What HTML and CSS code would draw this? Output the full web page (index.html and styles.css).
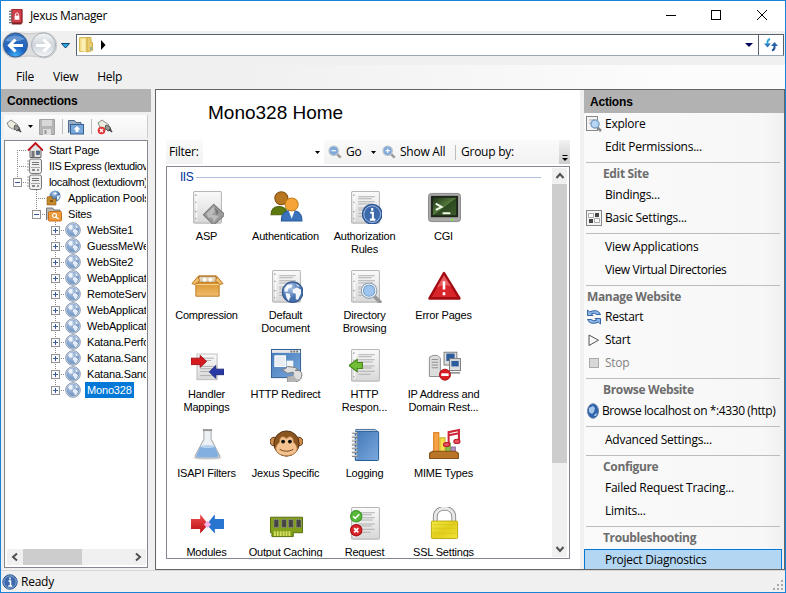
FILE: index.html
```html
<!DOCTYPE html>
<html lang="en">
<head>
<meta charset="utf-8">
<title>Jexus Manager</title>
<link rel="stylesheet" href="styles.css">
</head>
<body>
<svg class="defs" width="0" height="0">
  <defs>
    <linearGradient id="gPaper" x2="0" y2="1"><stop stop-color="#fafafa"/><stop offset="1" stop-color="#d8d8d8"/></linearGradient>
    <radialGradient id="gGlobe" cx=".4" cy=".3"><stop stop-color="#a8c6ea"/><stop offset="1" stop-color="#4570ad"/></radialGradient>
    <radialGradient id="gBack" cx=".5" cy=".95" r=".9"><stop stop-color="#3fb0f5"/><stop offset=".45" stop-color="#1c60c0"/><stop offset="1" stop-color="#3672bd"/></radialGradient>
    <linearGradient id="gGray" x2="0" y2="1"><stop stop-color="#f4f6f8"/><stop offset=".5" stop-color="#cfd5db"/><stop offset="1" stop-color="#f3f5f7"/></linearGradient>
    <linearGradient id="gBlue" x2="1" y2="1"><stop stop-color="#4279b9"/><stop offset="1" stop-color="#7ba8dc"/></linearGradient>
    <linearGradient id="gRed" x2="0" y2="1"><stop stop-color="#f05050"/><stop offset="1" stop-color="#b80d12"/></linearGradient>
    <linearGradient id="gGold" x2="1" y2="1"><stop stop-color="#f4ec4a"/><stop offset=".5" stop-color="#e2cf1c"/><stop offset="1" stop-color="#f0e23c"/></linearGradient>
    <linearGradient id="gBox" x2="0" y2="1"><stop stop-color="#d9952d"/><stop offset="1" stop-color="#f0bd6e"/></linearGradient>
    <linearGradient id="gTerm" x2="1" y2="1"><stop stop-color="#1f3318"/><stop offset=".5" stop-color="#557a3c"/><stop offset=".52" stop-color="#2c4a20"/><stop offset="1" stop-color="#3d5c2c"/></linearGradient>

    <symbol id="globe" viewBox="0 0 16 16"><circle cx="8" cy="8" r="7.300" fill="#d3e0ef" stroke="#8797ae"/><circle cx="8" cy="8" r="6.300" fill="url(#gGlobe)" opacity=".6"/><path d="M3 5l2-2 3 0-1 2 1 1-2 2-2-1zM8 8l2-1 3 2-1 3-2 1.500-1-2.500-1-1zM10 3l2 1 1 2-2 0z" fill="#fff" opacity=".8"/></symbol>
    <symbol id="server" viewBox="0 0 16 16"><rect x="2.500" y="1" width="12" height="14.500" rx="2" fill="#eee" stroke="#777"/><path d="M5 4.500h7M5 6.500h7" stroke="#777"/><path d="M4 9.500h9" stroke="#aaa"/><rect x="5" y="11" width="3" height="2" fill="#888"/><circle cx="11" cy="12" r="1" fill="#777"/><path d="M0 3h3M0 6h3M0 9h3M0 12h3" stroke="#999"/></symbol>
    <symbol id="home" viewBox="0 0 16 16"><path d="M3 7v8.500h11V7L8.500 2z" fill="#e4e4e4" stroke="#666"/><path d="M1 8.500L8.500 1 16 8.500" fill="none" stroke="#c4151c" stroke-width="1.800"/><rect x="4.500" y="9" width="3" height="6" fill="#777"/><rect x="9.500" y="9" width="3" height="3.500" fill="#4a74a8" stroke="#444" stroke-width=".6"/></symbol>
    <symbol id="pool" viewBox="0 0 16 16"><circle cx="9" cy="6" r="5.500" fill="url(#gGlobe)"/><path d="M7 3l3-1 1 2-2 1zM11 6l3-1-1 4-2 1z" fill="#e6f0fa"/><path d="M1 7l5-1v3h4v6H1z" fill="#c68a2c" stroke="#8a5a14" stroke-width=".6"/><path d="M4 10h3v2H4z" fill="#8a5a14"/></symbol>
    <symbol id="sites" viewBox="0 0 16 16"><path d="M.5 14V2h6l1.500 2h6v3" fill="#b9b9b9" stroke="#777"/><rect x="2.500" y="5.500" width="13" height="9.500" rx="1" fill="#ef9a3c" stroke="#c56f17"/><circle cx="8.500" cy="9.500" r="2" fill="none" stroke="#fff" stroke-width="1.200"/><path d="M10 11l2.500 2" stroke="#fff" stroke-width="1.300"/></symbol>
    <symbol id="plug" viewBox="0 0 16 16"><path d="M1 4l4-3 7 5-3 5-6-3z" fill="#ededdf" stroke="#888"/><path d="M9 6l4 2 1 3-3 1-3-3z" fill="#9a9a94" stroke="#555"/><path d="M12 10l3 3" stroke="#444" stroke-width="1.700"/></symbol>
    <symbol id="mag" viewBox="0 0 16 16"><path d="M9.500 9.500l5 5" stroke="#9c9c9c" stroke-width="3"/><circle cx="6.500" cy="6.500" r="5.300" fill="#7fa9dc" stroke="#b9c3cd" stroke-width="1.500"/></symbol>
    <symbol id="info" viewBox="0 0 16 16"><circle cx="8" cy="8" r="7.200" fill="#3c69ac" stroke="#2b5597"/><circle cx="8" cy="8" r="6.200" fill="none" stroke="#a9c0df" stroke-width=".7"/><path d="M6.500 7h2v4.500M6.300 12h4M8 3.500v2" fill="none" stroke="#fff" stroke-width="1.500"/></symbol>
    <symbol id="page" viewBox="0 0 32 32"><ellipse cx="16" cy="31.500" rx="13" ry="1" fill="#ddd"/><rect x="2.500" y=".5" width="27" height="30.500" rx="1" fill="url(#gPaper)" stroke="#b7b7b7"/><path d="M5.500 2v27" stroke="#fff"/><path d="M4 4h1.500M4 11h1.500M4 20h1.500M4 27h1.500" stroke="#999"/></symbol>
    <symbol id="lines" viewBox="0 0 32 32"><path d="M9 5.500h16M9 7.500h13M9 10.500h16M9 12.500h14M9 16.500h16M9 18.500h13M9 21.500h16M9 24.500h12" stroke="#b0b0b0"/></symbol>

    <symbol id="asp" viewBox="0 0 32 32"><use href="#page"/><path d="M22 13l11 10-11 10-10-10z" fill="#9b9b9b" stroke="#777"/><path d="M15 22l7-7 1 5-3 3 7 1-5 6-1-4-4 0z" fill="#bcbcbc"/><path d="M23 16l4 4-2 4z" fill="#777"/></symbol>
    <symbol id="users" viewBox="0 0 32 32"><path d="M1 23c0-7 5-8 8-8s8 2 8 8z" fill="#5e7810" stroke="#4b620a"/><circle cx="11" cy="7" r="6.300" fill="#b77622" stroke="#835010"/><path d="M11 29c0-8 4-10 10-10s10 2 10 10z" fill="#3a72bb" stroke="#2a5a9d"/><path d="M18 19l3 8 3-8z" fill="#fff"/><circle cx="21" cy="13" r="6.300" fill="#f5a437" stroke="#c77c16"/></symbol>
    <symbol id="auth" viewBox="0 0 32 32"><use href="#page"/><use href="#lines"/><use href="#info" x="12" y="12" width="21" height="21"/></symbol>
    <symbol id="cgi" viewBox="0 0 34 32"><rect x=".5" y="1.500" width="33" height="29" rx="3" fill="#aaa" stroke="#888"/><rect x="3" y="4" width="28" height="22" fill="#1d2419"/><rect x="5" y="6" width="24" height="18" fill="url(#gTerm)"/><path d="M8 12l6 3.500-6 3M15 22h8" fill="none" stroke="#eff8e7" stroke-width="2"/><path d="M24 28.500h2" stroke="#6f3" stroke-width="2"/></symbol>
    <symbol id="box" viewBox="0 0 34 32"><path d="M5 12h24v14H5z" fill="url(#gBox)" stroke="#bd7b20"/><path d="M8 5h18l4 7H4z" fill="#9a6725" stroke="#c98428"/><path d="M9 6h16l2 5H7z" fill="#e2d3b8"/><circle cx="14" cy="9" r="2" fill="#fff"/><circle cx="20" cy="9" r="2" fill="#fff"/><path d="M7 6l-6 7 3 1 5-4zM27 6l6 7-3 1-5-4z" fill="#edbb6a" stroke="#bd7b20"/><path d="M5 14h24" stroke="#f9d598"/></symbol>
    <symbol id="doc" viewBox="0 0 32 32"><use href="#page"/><use href="#lines"/><circle cx="22" cy="21.500" r="10" fill="url(#gGlobe)" stroke="#34588d"/><path d="M14 18l3-4 5 0-1 3-3 1-1 3-3 0zM15 22l4 1 1 3-2 4-2-3zM22 19l4-2 4 2 0 4-3 6-2-1 0-5-3-1zM25 13l4 3-2 0z" fill="#f4f8fc"/></symbol>
    <symbol id="browse" viewBox="0 0 32 32"><use href="#page"/><use href="#lines"/><path d="M24 25l7 7" stroke="#999" stroke-width="3.500"/><circle cx="19.500" cy="20" r="6.500" fill="#9cc4ef" stroke="#f5f5f5" stroke-width="2.500"/><circle cx="19.500" cy="20" r="7.500" fill="none" stroke="#8d9eb0"/><circle cx="19.500" cy="20" r="5.500" fill="none" stroke="#6f9dcf"/></symbol>
    <symbol id="error" viewBox="0 0 32 32"><path d="M15.500 3L1.500 27.500h29z" fill="#d9262b" stroke="#a40b12" stroke-width="2.500" stroke-linejoin="round"/><path d="M15.500 5l-7 12q7-4 14-1z" fill="#ee7477" opacity=".7"/><path d="M15.500 11v8M15.500 21.500v3" stroke="#fff" stroke-width="2.500"/></symbol>
    <symbol id="handler" viewBox="0 0 36 32"><rect x="6.500" y="3.500" width="22" height="28" fill="url(#gPaper)" stroke="#bbb"/><path d="M10 8h15M10 10.500h12M10 17h15M10 19.500h13M10 22.500h15M10 27h14" stroke="#aaa"/><path d="M0 8h10V5l7 6.500-7 6.500v-3H0z" fill="#d71920" stroke="#9c1015"/><path d="M36 20H27v-4l-7 7 7 7v-4h9z" fill="#2939a5" stroke="#1c277c"/></symbol>
    <symbol id="redirect" viewBox="0 0 34 34"><rect x="1.500" y=".5" width="30" height="29" fill="url(#gBlue)" stroke="#315e94"/><path d="M2 2.500h29" stroke="#e7e7e7" stroke-width="3"/><path d="M21 2.500h8" stroke="#777" stroke-width="2" stroke-dasharray="2 1"/><rect x="5" y="7" width="11" height="11" fill="#e8edf3" stroke="#fff"/><rect x="17" y="12" width="7" height="8" fill="#f4f6f9"/><path d="M12 21q5 0 6-3l8 1 3 3h-3c6-1 8 3 6 8-2 4-8 5-14 4v-6c5 1 7-1 6-4l-6 1z" fill="#dedede" stroke="#777"/><path d="M18 28v6c5 1 9 0 12-3q-4 1-5-4-3 2-7 1z" fill="#b5b5b5"/></symbol>
    <symbol id="response" viewBox="0 0 32 32"><use href="#page"/><use href="#lines"/><path d="M0 16l8-6v3h5v6H8v3z" fill="#72bd38" stroke="#438617"/></symbol>
    <symbol id="ip" viewBox="0 0 36 32"><path d="M1.500 28V7l4-2h5l3 3v20z" fill="#ddd" stroke="#888"/><path d="M4 9.500h7M4 12.500h7M4 15.500h7M4 18.500h7" stroke="#888"/><rect x="17.500" y="1.500" width="14" height="14" fill="#ddd" stroke="#777"/><rect x="20" y="3" width="9" height="8" fill="#2d5c9e"/><rect x="23.500" y="8.500" width="12" height="13" fill="#ddd" stroke="#777"/><rect x="25.500" y="11" width="8" height="6" fill="#2d5c9e"/><path d="M22 24h13" stroke="#999" stroke-width="2"/><circle cx="18.500" cy="26" r="6" fill="#d91d23" stroke="#a90e13"/><path d="M14.500 26h8" stroke="#fff" stroke-width="3"/></symbol>
    <symbol id="flask" viewBox="0 0 32 32"><ellipse cx="16" cy="29" rx="14" ry="2" fill="#e5e5e5"/><path d="M12.500 2v9L4 27q0 2 3 2h18q3 0 3-2L19.500 11V2z" fill="#edf1f5" stroke="#aaa"/><path d="M9 18h14l4 9q-1 1.500-3 1.500H8q-3 0-3-1.500z" fill="#82afe0"/><ellipse cx="16" cy="18" rx="7" ry="1.500" fill="#b6d1ed"/><path d="M11.500 2h9" stroke="#999" stroke-width="2"/></symbol>
    <symbol id="monkey" viewBox="0 0 34 32"><circle cx="4.500" cy="13" r="4.500" fill="#cf8d4b" stroke="#523012"/><circle cx="29.500" cy="13" r="4.500" fill="#cf8d4b" stroke="#523012"/><circle cx="17" cy="15" r="13" fill="#8a541f" stroke="#523012"/><path d="M6 20c0-4 4-5 4-8 0-5 5-5 7-2 2-3 7-3 7 2 0 3 4 4 4 8 0 10-22 10-22 0z" fill="#f3c28f" stroke="#b07a45"/><circle cx="13.500" cy="13" r="2" fill="#111"/><circle cx="20.500" cy="13" r="2" fill="#111"/><path d="M10 21q7 4 14 0" fill="none" stroke="#784617"/></symbol>
    <symbol id="book" viewBox="0 0 32 34"><path d="M6 1.500h20l2 2v30H6z" fill="#d0d8e1" stroke="#456f9e"/><rect x="5.500" y="3.500" width="24" height="30" rx="1" fill="url(#gBlue)" stroke="#235b99"/><path d="M7 5v27" stroke="#abc8e7"/><path d="M2 5h6M2 9h6M2 13h6M2 17h6M2 21h6M2 25h6M2 29h6" stroke="#777" stroke-width="2"/><path d="M2 4.500h5M2 8.500h5M2 12.500h5M2 16.500h5M2 20.500h5M2 24.500h5M2 28.500h5" stroke="#eee"/></symbol>
    <symbol id="mime" viewBox="0 0 32 32"><rect x="5.500" y="4.500" width="5" height="19" fill="#f6a246" stroke="#d77c19"/><rect x="11.500" y="9.500" width="5" height="14" fill="#f5df4f" stroke="#c8ac20"/><rect x="17.500" y="14.500" width="4" height="9" fill="#8bc749" stroke="#609927"/><rect x="22.500" y="18.500" width="4" height="5" fill="#b294c2" stroke="#8b6c9d"/><path d="M1.500 24.500l3-2h22l3 2v5h-28z" fill="#b97527" stroke="#885015"/><path d="M20 16V4l10-2v11M20 7l10-2" fill="none" stroke="#ce2537" stroke-width="2"/><ellipse cx="18" cy="16" rx="3" ry="2" fill="#eb5261" stroke="#b71c2c"/><ellipse cx="28" cy="13" rx="3" ry="2" fill="#eb5261" stroke="#b71c2c"/></symbol>
    <symbol id="modules" viewBox="0 0 36 32"><path d="M0 11h10V6l9 11-9 10v-5H0z" fill="url(#gRed)"/><path d="M36 11H26V6l-9 11 9 10v-5h10z" fill="#2775ce"/><path d="M18 13l4 4-4 4-4-4z" fill="#f4b4e9"/></symbol>
    <symbol id="ram" viewBox="0 0 34 32"><path d="M.5 9.500h33v16H24v4H2v-4H.5z" fill="#829f1c" stroke="#596f10"/><path d="M5 24v5M8 24v5M11 24v5M14 24v5M17 24v5M20 24v5" stroke="#d6dd61" stroke-width="2"/><path d="M4 12h5v8H4zM12 12h5v8h-5zM19 12h5v8h-5zM27 12h5v8h-5z" fill="#444" stroke="#a4a4a4" stroke-width="1" stroke-dasharray="1 1"/></symbol>
    <symbol id="request" viewBox="0 0 32 32"><use href="#page"/><use href="#lines"/><circle cx="7" cy="9" r="5.500" fill="#57b83a" stroke="#379620"/><path d="M4 9l2 2 4-4" stroke="#fff" stroke-width="1.500" fill="none"/><circle cx="7" cy="22.500" r="5.500" fill="#d9262b" stroke="#a80e13"/><path d="M5 20.500l4 4m0-4l-4 4" stroke="#fff" stroke-width="1.700"/></symbol>
    <symbol id="lock" viewBox="0 0 32 34"><path d="M6.500 15V10C6.500-1.500 25.500-1.500 25.500 10v5" fill="none" stroke="#8d8d8d" stroke-width="5"/><path d="M6.500 15V10C6.500-1.500 25.500-1.500 25.500 10v5" fill="none" stroke="#e8e8e8" stroke-width="3"/><rect x="2.500" y="14.500" width="27" height="18" rx="1" fill="url(#gGold)" stroke="#bca90c"/><path d="M4 18h24M4 22h24M4 27h24" stroke="#d0bd16" opacity=".5"/></symbol>
  </defs>
</svg>

<div class="window">
  <header class="title">
    <svg class="app-icon" viewBox="0 0 16 18"><path d="M3 1.500h11.500v14l-1.500 2H3z" fill="#7b2025"/><rect x="3" y="1.500" width="10.500" height="14" fill="#d33f48" stroke="#a32730"/><path d="M0 3.500h4M0 6.500h4M0 9.500h4M0 12.500h4M0 15.500h4" stroke="#666" stroke-width="1.300"/><rect x="6" y="8" width="5" height="4.500" fill="#fff"/><path d="M7 8V6q1.500-2 3 0v2" fill="none" stroke="#fff"/></svg>
    <span class="title-text">Jexus Manager</span>
    <svg class="win-buttons" viewBox="0 0 120 30" fill="none" stroke="#000"><path d="M0 14.500h10"/><rect x="45.500" y="9.500" width="9" height="9"/><path d="M91 9l10 10m0-10l-10 10"/></svg>
  </header>

  <div class="nav">
    <svg class="nav-buttons" viewBox="0 0 72 32"><path d="M14 1.500Q28 4 43 1.500A12.500 12.500 0 0 1 43 27Q28 23 14 27A12.500 12.500 0 0 1 14 1.500" fill="#dedede" stroke="#c8c8c8"/><circle cx="14.500" cy="14" r="12" fill="url(#gBack)" stroke="#3a5d8e"/><path d="M5 8q9-7 19 0-9 4-19 2z" fill="#8ab3e0" opacity=".6"/><path d="M22 14.500H9m5.500-6L8.500 14.500l6 6" fill="none" stroke="#fff" stroke-width="3"/><circle cx="42.500" cy="14" r="12" fill="url(#gGray)" stroke="#a9b0b7"/><path d="M35 14.500h13m-5.500-6l6 6-6 6" fill="none" stroke="#fff" stroke-width="3"/><path d="M60.500 12.500h8l-4 4.500z" fill="#29abe2" stroke="#123e73"/></svg>
    <div class="address">
      <svg class="folder" viewBox="0 0 14 18"><path d="M.5 1.500H8v14H.5z" fill="#f2dc88" stroke="#d9bd5a"/><path d="M8 1.500h4v5h1.500v8L8 16z" fill="#eacb6c" stroke="#cfae4b"/><path d="M2.500 3h4v13l-4-1z" fill="#fbefb4"/><path d="M12 11v3" stroke="#4b9bd8"/></svg>
      <svg class="crumb" viewBox="0 0 6 10"><path d="M1 0v10l4.500-5z"/></svg>
      <svg class="addr-caret" viewBox="0 0 8 4"><path d="M0 0h8L4 4z" fill="#00005c"/></svg>
      <div class="refresh"><svg viewBox="0 0 14 14"><path d="M0 5.500h7L3.500 9.500z" fill="#2f78bf"/><path d="M3.500 6Q3 2 6 1" fill="none" stroke="#2fa4dc" stroke-width="2"/><path d="M7 8h7L10.500 4z" fill="#2b66ac"/><path d="M10.500 7.500q.5 4-2.500 5" fill="none" stroke="#25549a" stroke-width="2"/></svg></div>
    </div>
  </div>

  <nav class="menu"><span>File</span><span>View</span><span>Help</span></nav>

  <main class="main">
    <section class="connections">
      <h2 class="panel-head">Connections</h2>
      <div class="conn-tools">
        <svg class="t16" viewBox="0 0 16 16"><use href="#plug"/></svg>
        <svg class="caret conn-caret" viewBox="0 0 5 3"><path d="M0 0h5L2.500 3z"/></svg>
        <svg class="t16 save" viewBox="0 0 16 16"><path d="M.5.500h15v15H.5z" fill="#b5b5b5" stroke="#a2a2a2"/><path d="M3 1h10v6H3z" fill="#d8d8d8"/><path d="M4 10h8v6H4z" fill="#ddd"/><path d="M5.500 11h2v4h-2z" fill="#999"/></svg>
        <i class="vsep"></i>
        <svg class="t16 up" viewBox="0 0 16 16"><path d="M.5 14V1.500h6L8 3.500h5v3" fill="#9badc1" stroke="#4c6b8f"/><rect x="2.500" y="5.500" width="13" height="9.500" fill="#78a7dc" stroke="#365f94"/><path d="M9 7l3.500 3.500h-2V13h-3v-2.500h-2z" fill="#fff"/></svg>
        <i class="vsep"></i>
        <svg class="t16 drop" viewBox="0 0 16 16"><use href="#plug"/><circle cx="4.500" cy="11.500" r="3.800" fill="#de3434"/><path d="M3 10l3 3m0-3l-3 3" stroke="#fff" stroke-width="1.300"/></svg>
      </div>
      <div class="tree">
        <div class="row"><i class="joint down"></i><svg class="ti"><use href="#home"/></svg><span>Start Page</span></div>
        <div class="row narrow"><i class="joint full"></i><svg class="ti"><use href="#server"/></svg><span>IIS Express (lextudiovm)</span></div>
        <div class="row narrow"><i class="joint"><b class="exp"></b></i><svg class="ti"><use href="#server"/></svg><span>localhost (lextudiovm)</span></div>
        <div class="row l2"><i class="joint full"></i><svg class="ti"><use href="#pool"/></svg><span>Application Pools</span></div>
        <div class="row l2"><i class="joint"><b class="exp"></b></i><svg class="ti"><use href="#sites"/></svg><span>Sites</span></div>
        <div class="row l3"><i class="joint full"><b class="exp plus"></b></i><svg class="ti"><use href="#globe"/></svg><span>WebSite1</span></div>
        <div class="row l3"><i class="joint full"><b class="exp plus"></b></i><svg class="ti"><use href="#globe"/></svg><span>GuessMeWeb</span></div>
        <div class="row l3"><i class="joint full"><b class="exp plus"></b></i><svg class="ti"><use href="#globe"/></svg><span>WebSite2</span></div>
        <div class="row l3"><i class="joint full"><b class="exp plus"></b></i><svg class="ti"><use href="#globe"/></svg><span>WebApplication</span></div>
        <div class="row l3"><i class="joint full"><b class="exp plus"></b></i><svg class="ti"><use href="#globe"/></svg><span>RemoteService</span></div>
        <div class="row l3"><i class="joint full"><b class="exp plus"></b></i><svg class="ti"><use href="#globe"/></svg><span>WebApplication</span></div>
        <div class="row l3"><i class="joint full"><b class="exp plus"></b></i><svg class="ti"><use href="#globe"/></svg><span>WebApplication</span></div>
        <div class="row l3"><i class="joint full"><b class="exp plus"></b></i><svg class="ti"><use href="#globe"/></svg><span>Katana.Performance</span></div>
        <div class="row l3"><i class="joint full"><b class="exp plus"></b></i><svg class="ti"><use href="#globe"/></svg><span>Katana.Sandbox</span></div>
        <div class="row l3"><i class="joint full"><b class="exp plus"></b></i><svg class="ti"><use href="#globe"/></svg><span>Katana.Sandbox</span></div>
        <div class="row l3"><i class="joint"><b class="exp plus"></b></i><svg class="ti"><use href="#globe"/></svg><span class="selected">Mono328</span></div>
        <div class="hscroll"><svg class="chev" viewBox="0 0 16 16"><path d="M10 4.500L6 8l4 3.500"/></svg><div class="hthumb"></div><svg class="chev right" viewBox="0 0 16 16"><path d="M6 4.500L10 8l-4 3.500"/></svg></div>
      </div>
    </section>

    <section class="center">
      <h1>Mono328 Home</h1>
      <div class="filter">
        <span class="f-label">Filter:</span>
        <div class="f-input"><svg class="caret" viewBox="0 0 5 3"><path d="M0 0h5L2.500 3z"/></svg></div>
        <svg class="f-mag" viewBox="0 0 16 16"><use href="#mag"/><path d="M4 6.500h5" stroke="#fff" stroke-width="1.300"/></svg>
        <span class="f-go">Go</span>
        <svg class="caret f-caret" viewBox="0 0 5 3"><path d="M0 0h5L2.500 3z"/></svg>
        <svg class="f-mag" viewBox="0 0 16 16"><use href="#mag"/><path d="M4 6.500h5M6.500 4v5" stroke="#fff" stroke-width="1.300"/></svg>
        <span class="f-show">Show All</span>
        <i class="vsep f-sep"></i>
        <span>Group by:</span>
        <div class="overflow"><svg viewBox="0 0 6 6"><path d="M.5.500h5" stroke="#000"/><path d="M0 3h6L3 6z"/></svg></div>
      </div>
      <div class="list">
        <div class="features">
          <div class="group"><span>IIS</span><i></i></div>
          <div class="grid">
            <div class="item"><svg><use href="#asp"/></svg><p>ASP</p></div>
            <div class="item"><svg><use href="#users"/></svg><p>Authentication</p></div>
            <div class="item"><svg><use href="#auth"/></svg><p>Authorization<br>Rules</p></div>
            <div class="item"><svg><use href="#cgi"/></svg><p>CGI</p></div>
            <div class="item"><svg><use href="#box"/></svg><p>Compression</p></div>
            <div class="item"><svg><use href="#doc"/></svg><p>Default<br>Document</p></div>
            <div class="item"><svg><use href="#browse"/></svg><p>Directory<br>Browsing</p></div>
            <div class="item"><svg><use href="#error"/></svg><p>Error Pages</p></div>
            <div class="item"><svg><use href="#handler"/></svg><p>Handler<br>Mappings</p></div>
            <div class="item"><svg><use href="#redirect"/></svg><p>HTTP Redirect</p></div>
            <div class="item"><svg><use href="#response"/></svg><p>HTTP<br>Respon...</p></div>
            <div class="item"><svg><use href="#ip"/></svg><p>IP Address and<br>Domain Rest...</p></div>
            <div class="item"><svg><use href="#flask"/></svg><p>ISAPI Filters</p></div>
            <div class="item"><svg><use href="#monkey"/></svg><p>Jexus Specific</p></div>
            <div class="item"><svg><use href="#book"/></svg><p>Logging</p></div>
            <div class="item"><svg><use href="#mime"/></svg><p>MIME Types</p></div>
            <div class="item"><svg><use href="#modules"/></svg><p>Modules</p></div>
            <div class="item"><svg><use href="#ram"/></svg><p>Output Caching</p></div>
            <div class="item"><svg><use href="#request"/></svg><p>Request</p></div>
            <div class="item"><svg><use href="#lock"/></svg><p>SSL Settings</p></div>
          </div>
        </div>
        <div class="vscroll"><svg class="chev" viewBox="0 0 16 16"><path d="M4.500 10L8 6l3.500 4"/></svg><div class="vthumb"></div><svg class="chev bottom" viewBox="0 0 16 16"><path d="M4.500 6L8 10l3.500-4"/></svg></div>
      </div>
    </section>

    <aside class="actions">
      <h2 class="panel-head">Actions</h2>
      <div class="act"><svg class="ai" viewBox="0 0 16 16"><rect x=".5" y=".5" width="11" height="14" fill="#f4f4f4" stroke="#888"/><path d="M3 4h6M3 7h3" stroke="#aaa"/><path d="M11 11l4 4" stroke="#888" stroke-width="2.500"/><circle cx="9" cy="8" r="4" fill="#b7d6f3" stroke="#7da0c5" stroke-width="1.500"/></svg>Explore</div>
      <div class="act">Edit Permissions...</div>
      <hr>
      <h3>Edit Site</h3>
      <div class="act">Bindings...</div>
      <div class="act"><svg class="ai" viewBox="0 0 16 16"><rect x=".5" y=".5" width="15" height="15" fill="#f3f3f3" stroke="#888"/><path d="M2.500 3.500h5v4h-5zM8.500 8.500h5v4h-5z" fill="#fff" stroke="#aaa"/><path d="M9 3h4v4H9zM3 9h4v4H3z" fill="#444"/></svg>Basic Settings...</div>
      <hr>
      <div class="act">View Applications</div>
      <div class="act tight">View Virtual Directories</div>
      <hr>
      <h3 class="wide">Manage Website</h3>
      <div class="act"><svg class="ai" viewBox="0 0 16 16"><path d="M1.500 1v5.500H7L5.300 4.800Q8 3.300 11 5.500h3.500Q12-.5 3.500 2.800zM14.500 15V9.500H9l1.700 1.700Q8 12.700 5 10.500H1.500q2.500 6 11 2.700z" fill="#8cb7e6" stroke="#3665a5"/></svg>Restart</div>
      <div class="act"><svg class="ai" viewBox="0 0 16 16"><path d="M3 3v10.500L12.500 8.200z" fill="#f6f6f6" stroke="#555"/></svg>Start</div>
      <div class="act disabled"><svg class="ai" viewBox="0 0 16 16"><rect x="3.500" y="3.500" width="9" height="9" fill="#d7d7d7" stroke="#aaa"/></svg>Stop</div>
      <hr>
      <h3>Browse Website</h3>
      <div class="act browse"><svg class="ai" viewBox="0 0 16 16"><ellipse cx="7" cy="8" rx="5.500" ry="7.300" fill="#2f65ad" stroke="#7188a8"/><path d="M3 5l4-2 2 2-1 4-2 2-3-2zM9 11l2-1-1 3-2 0z" fill="#a9c9ec"/></svg>Browse localhost on *:4330 (http)</div>
      <hr>
      <div class="act">Advanced Settings...</div>
      <hr>
      <h3>Configure</h3>
      <div class="act">Failed Request Tracing...</div>
      <div class="act">Limits...</div>
      <hr>
      <h3>Troubleshooting</h3>
      <div class="act hot">Project Diagnostics</div>
    </aside>
  </main>

  <footer class="status">
    <svg class="st-icon"><use href="#info"/></svg><span>Ready</span>
    <svg class="grip" viewBox="0 0 11 11"><path d="M8 0h2v2H8zM4 4h2v2H4zM8 4h2v2H8zM0 8h2v2H0zM4 8h2v2H4zM8 8h2v2H8z" fill="#aaa"/></svg>
  </footer>
</div>
</body>
</html>
```
FILE: styles.css
```css
* { box-sizing: border-box; }
body { margin: 0; font: 12px/16px "Open Sans", "Noto Sans", sans-serif; letter-spacing: -0.25px; color: #000; overflow: hidden; }
svg { display: block; flex: none; overflow: visible; }
.defs { position: absolute; }
h1, h2, h3, p { margin: 0; }

.window { width: 786px; height: 593px; border: 1px solid #1883d7; background: #f0f0f0; display: flex; flex-direction: column; }

.title { height: 30px; background: #fff; display: flex; align-items: center; padding-left: 8px; }
.app-icon { width: 15px; height: 17px; }
.title-text { margin-left: 6px; flex: 1; letter-spacing: -0.4px; }
.win-buttons { width: 120px; height: 30px; margin-right: -1px; }

.nav { height: 34px; display: flex; align-items: flex-start; padding: 0 1px 0 0; }
.nav-buttons { width: 72px; height: 32px; }
.address { flex: 1; height: 22px; margin: 3px 0 0 3px; border: 1px solid #56616d; border-bottom-color: #9aa6b2; background: #fff; display: flex; align-items: center; }
.folder { width: 14px; height: 18px; margin-left: 2px; }
.crumb { width: 6px; height: 10px; margin-left: 7px; }
.addr-caret { width: 8px; height: 4px; margin-left: auto; margin-right: 5px; }
.refresh { width: 25px; align-self: stretch; border-left: 1px solid #56616d; display: flex; align-items: center; justify-content: center; }
.refresh svg { width: 14px; height: 14px; }

.menu { height: 24px; display: flex; align-items: center; padding-left: 15px; gap: 19px; background: linear-gradient(90deg, #f0f0f0 30%, #fcfcfc 85%); }

.main { height: 481px; display: flex; }
.panel-head { height: 23px; font: bold 12px/25px "Liberation Sans", sans-serif; letter-spacing: -0.2px; background: #b2b2b2; padding-left: 6px; }

.connections { width: 154px; padding-right: 4px; display: flex; flex-direction: column; }
.connections .panel-head { line-height: 24px; }
.conn-tools { height: 23px; margin: 3px 3px 2px 3px; background: linear-gradient(#fcfcfc, #f3f3f3); border-right: 1px solid #ccc; display: flex; align-items: center; }
.t16 { width: 16px; height: 16px; margin-left: 2px; }
.caret { width: 5px; height: 3px; }
.conn-caret { margin-left: 6px; }
.t16.save { margin-left: 6px; }
.vsep { width: 1px; height: 15px; background: #bdbdbd; margin-left: 7px; }
.t16.up, .t16.drop { margin-left: 5px; }

.tree { height: 428px; width: 144px; margin-left: 3px; border: 1px solid #828790; background: #fff; font: 11px/14px "Liberation Sans", sans-serif; letter-spacing: -0.17px; padding: 1px 1px 0 3px; display: flex; flex-direction: column; overflow: hidden; }
.row { height: 16px; flex: none; display: flex; align-items: center; white-space: nowrap; overflow: hidden; }
.narrow { letter-spacing: -0.35px; }
.l2 { padding-left: 19px; }
.l3 { padding-left: 38px; }
.joint { width: 19px; height: 16px; flex: none; display: flex; align-items: center; padding-left: 5px;
  background: repeating-linear-gradient(90deg, #888 0 1px, transparent 1px 2px) 9px 8px / 10px 1px no-repeat, repeating-linear-gradient(#888 0 1px, transparent 1px 2px) 9px 0 / 1px 8px no-repeat; }
.joint.down { background-position: 9px 8px, 9px 8px; }
.joint.full { background-size: 10px 1px, 1px 16px; }
.exp { width: 9px; height: 9px; border: 1px solid #919191; background: linear-gradient(#3b5998, #3b5998) 1px 3px / 5px 1px no-repeat #fcfcfc; }
.exp.plus { background: linear-gradient(#3b5998, #3b5998) 1px 3px / 5px 1px no-repeat, linear-gradient(#3b5998, #3b5998) 3px 1px / 1px 5px no-repeat #fcfcfc; }
.ti { width: 16px; height: 16px; }
.row span { margin-left: 4px; padding: 0 2px; line-height: 16px; }
.selected { background: #0078d7; color: #fff; }
.hscroll { margin: auto 0 2px -1px; height: 16px; background: #f0f0f0; display: flex; }
.hthumb { width: 59px; background: #cdcdcd; }
.chev { width: 16px; height: 16px; fill: none; stroke: #505050; stroke-width: 2; }
.right { margin-left: auto; }

.center { width: 425px; border: 1px solid #646464; border-right: 0; background: #fff; display: flex; flex-direction: column; }
h1 { font: 19px/22px "Liberation Sans", sans-serif; letter-spacing: 0; margin: 12px 0 0 52px; }
.filter { height: 24px; margin: 16px 0 2px 10px; width: 404px; background: linear-gradient(#fafafa, #f2f2f2); display: flex; align-items: center; padding-left: 3px; white-space: nowrap; }
.f-label { width: 34px; }
.f-input { width: 121px; height: 24px; background: #fff; display: flex; align-items: center; justify-content: flex-end; padding-right: 4px; }
.f-mag { width: 14px; height: 14px; margin-left: 4px; }
.f-go { margin-left: 4px; width: 21px; }
.f-caret { margin: 0 2px 0 4px; }
.f-show { margin-left: 4px; width: 51px; }
.f-sep { margin: 0 5px 0 4px; }
.overflow { width: 11px; height: 24px; background: linear-gradient(#f2f2f2, #ccc); margin-left: auto; padding: 15px 0 0 3px; }
.overflow svg { width: 6px; height: 6px; }

.list { width: 404px; height: 393px; margin: 0 0 0 10px; border: 1px solid #828790; display: flex; padding: 1px; }
.features { width: 384px; overflow: hidden; font: 11px/13px "Liberation Sans", sans-serif; letter-spacing: -0.2px; }
.group { height: 18px; display: flex; align-items: center; padding-left: 12px; gap: 3px; color: #003399; font-size: 12px; letter-spacing: -0.5px; }
.group i { width: 345px; height: 1px; background: #aebfe0; }
.grid { display: grid; grid-template-columns: repeat(4, 79px); grid-auto-rows: 79px; padding-top: 5px; margin-left: -1px; }
.item { display: flex; flex-direction: column; align-items: center; text-align: center; white-space: nowrap; }
.item svg { width: 33px; height: 33px; margin-left: 1px; }
.item p { margin-top: 6px; }
.vscroll { width: 15px; margin-left: auto; margin-right: 1px; background: #f0f0f0; display: flex; flex-direction: column; }
.vthumb { height: 279px; background: #cdcdcd; }
.bottom { margin-top: auto; }

.actions { width: 205px; border: solid #646464; border-width: 1px 1px 1px 0; background: linear-gradient(90deg, #f0f0f0 4px, #fafafa 4px, #f7f7f7 90%, #f0f0f0); padding-left: 4px; white-space: nowrap; overflow: hidden; }
.act { height: 23px; line-height: 22px; padding-left: 21px; position: relative; }
.ai { position: absolute; left: 2px; top: 3px; width: 16px; height: 16px; }
.tight { letter-spacing: -0.35px; }
hr { margin: 3px 4px 2px 2px; border: 0; height: 1px; background: #bdbdbd; }
h3 { font: bold 12px/18px "Open Sans", sans-serif; letter-spacing: -0.35px; height: 19px; color: #6d6d6d; padding-left: 19px; }
.wide { height: 18px; padding-left: 3px; }
.browse { padding-left: 18px; letter-spacing: -0.4px; }
.disabled { color: #838383; }
.hot { margin: 1px 2px 0 0; height: 23px; line-height: 19px; padding-left: 20px; border: 1px solid #0078d7; background: #b3d7f3; }

.status { height: 22px; display: flex; align-items: center; padding: 0 0 0 1px; border-top: 1px solid #d7d7d7; }
.st-icon { width: 16px; height: 16px; }
.status span { margin-left: 3px; flex: 1; }
.grip { width: 11px; height: 11px; margin: 7px 1px 0 0; }
```
